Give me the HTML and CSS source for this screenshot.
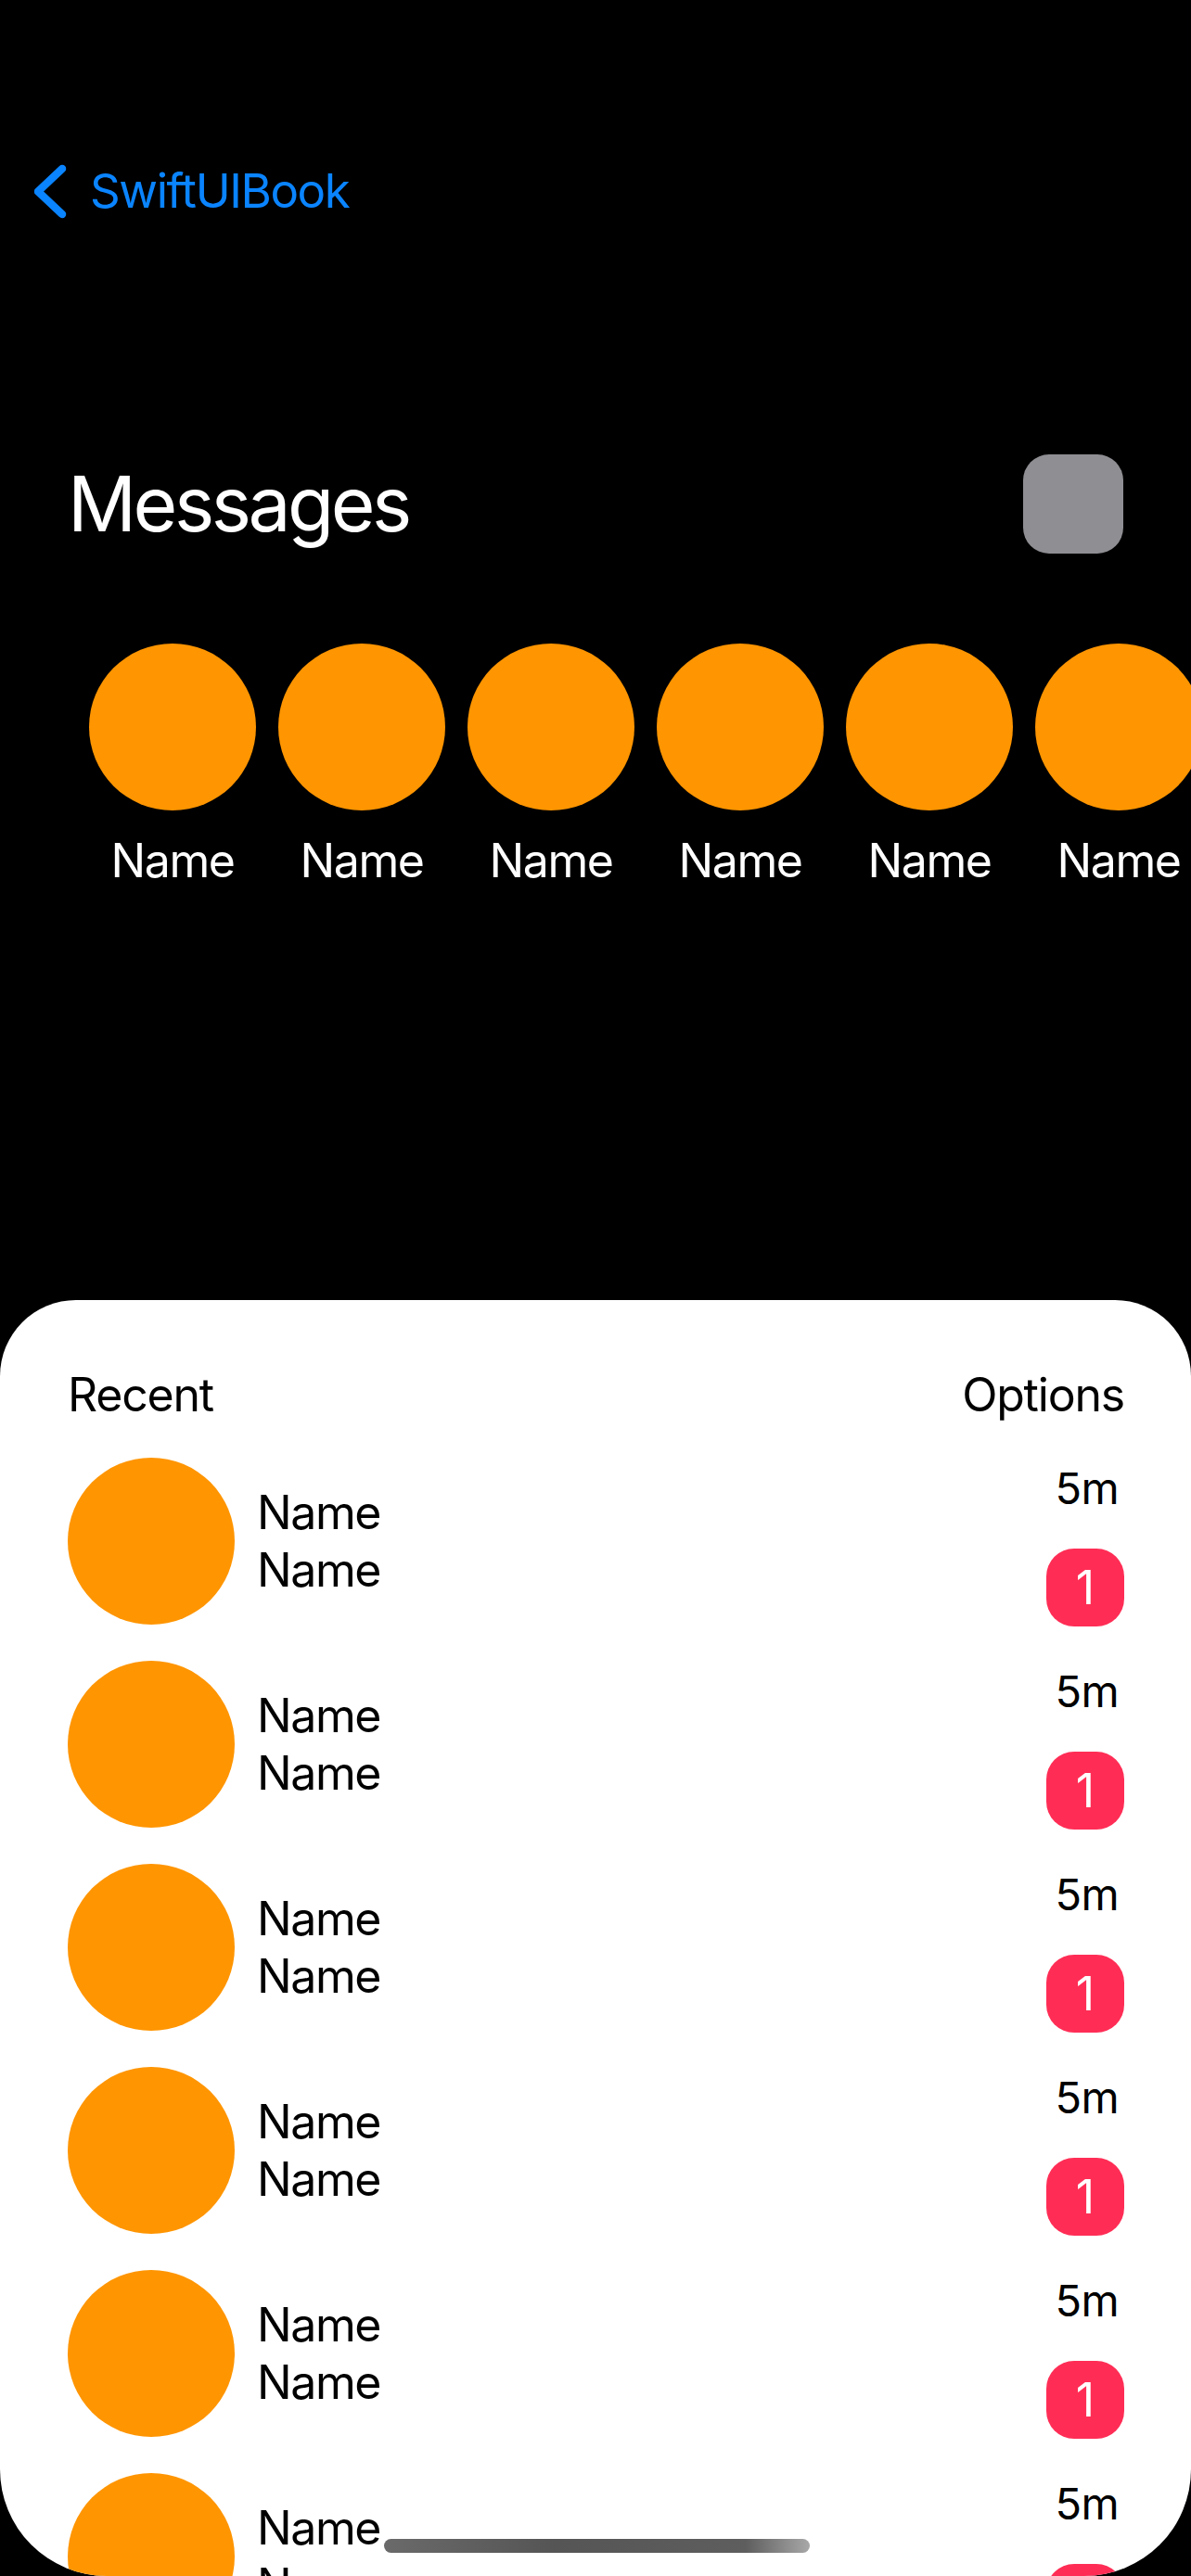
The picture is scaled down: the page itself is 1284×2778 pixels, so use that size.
FILE: index.html
```html
<!DOCTYPE html>
<html>
<head>
<meta charset="utf-8">
<link rel="stylesheet" href="styles.css">
</head>
<body>
<div class="screen">
  <div class="nav">
    <div class="back">
      <svg class="chev" width="36" height="60" viewBox="0 0 36 60"><path d="M30 6 L4 30.5 L30 55" fill="none" stroke="#0a84ff" stroke-width="8.5" stroke-linecap="round" stroke-linejoin="round"/></svg>
      <span class="back-label">SwiftUIBook</span>
    </div>
  </div>
  <div class="title-row">
    <h1 class="title">Messages</h1>
    <div class="square"></div>
  </div>
  <div class="stories">
    <div class="story"><div class="story-avatar"></div><div class="story-name">Name</div></div>
    <div class="story"><div class="story-avatar"></div><div class="story-name">Name</div></div>
    <div class="story"><div class="story-avatar"></div><div class="story-name">Name</div></div>
    <div class="story"><div class="story-avatar"></div><div class="story-name">Name</div></div>
    <div class="story"><div class="story-avatar"></div><div class="story-name">Name</div></div>
    <div class="story"><div class="story-avatar"></div><div class="story-name">Name</div></div>
  </div>
  <div class="sheet">
    <div class="sheet-header">
      <span>Recent</span>
      <span>Options</span>
    </div>
    <div class="list">
      <div class="row"><div class="avatar"></div><div class="names"><div>Name</div><div>Name</div></div><div class="meta"><div class="time">5m</div><div class="badge">1</div></div></div>
      <div class="row"><div class="avatar"></div><div class="names"><div>Name</div><div>Name</div></div><div class="meta"><div class="time">5m</div><div class="badge">1</div></div></div>
      <div class="row"><div class="avatar"></div><div class="names"><div>Name</div><div>Name</div></div><div class="meta"><div class="time">5m</div><div class="badge">1</div></div></div>
      <div class="row"><div class="avatar"></div><div class="names"><div>Name</div><div>Name</div></div><div class="meta"><div class="time">5m</div><div class="badge">1</div></div></div>
      <div class="row"><div class="avatar"></div><div class="names"><div>Name</div><div>Name</div></div><div class="meta"><div class="time">5m</div><div class="badge">1</div></div></div>
      <div class="row"><div class="avatar"></div><div class="names"><div>Name</div><div>Name</div></div><div class="meta"><div class="time">5m</div><div class="badge">1</div></div></div>
    </div>
  </div>
  <div class="home-indicator"></div>
</div>
</body>
</html>
```

FILE: styles.css
```css
* { box-sizing: border-box; }
html, body {
  margin: 0;
  padding: 0;
  background: #000;
}
body {
  width: 1284px;
  height: 2778px;
  overflow: hidden;
  font-family: Inter, "Liberation Sans", sans-serif;
}
.screen {
  position: relative;
  width: 1284px;
  height: 2778px;
  overflow: hidden;
  background: #000;
  border-radius: 0 0 115px 115px;
  display: flex;
  flex-direction: column;
}
.nav {
  margin-top: 176px;
  height: 60px;
  padding-left: 37px;
}
.back {
  display: flex;
  align-items: center;
  height: 60px;
  gap: 24px;
}
.chev { display: block; }
.back-label {
  color: #0a84ff;
  font-size: 51px;
  line-height: 60px;
  letter-spacing: -1.4px;
}
.title-row {
  margin-top: 254px;
  height: 107px;
  padding: 0 73px;
  display: flex;
  align-items: center;
  justify-content: space-between;
}
.title {
  margin: 0;
  color: #fff;
  font-weight: 400;
  font-size: 82px;
  line-height: 100px;
  letter-spacing: -3.5px;
}
.square {
  width: 108px;
  height: 107px;
  border-radius: 28px;
  background: #8e8e93;
}
.stories {
  margin-top: 97px;
  padding-left: 96px;
  display: flex;
  gap: 24px;
  flex-wrap: nowrap;
}
.story {
  flex: 0 0 180px;
  display: flex;
  flex-direction: column;
  align-items: center;
}
.story-avatar {
  width: 180px;
  height: 180px;
  border-radius: 50%;
  background: #ff9500;
}
.story-name {
  margin-top: 24px;
  color: #fff;
  font-size: 50px;
  line-height: 61px;
  letter-spacing: -1.4px;
  white-space: nowrap;
}
.sheet {
  margin-top: 443px;
  flex: 1 0 auto;
  background: #fff;
  border-radius: 82px 82px 0 0;
  padding: 72px 72px 0 73px;
}
.sheet-header {
  display: flex;
  justify-content: space-between;
  color: #000;
  font-size: 50px;
  line-height: 61px;
  letter-spacing: -1.2px;
}
.list {
  margin-top: 37px;
  display: flex;
  flex-direction: column;
  gap: 37px;
}
.row {
  display: flex;
  align-items: flex-start;
  height: 182px;
}
.avatar {
  flex: 0 0 180px;
  width: 180px;
  height: 180px;
  border-radius: 50%;
  background: #ff9500;
}
.names {
  margin-left: 24px;
  margin-top: 28px;
  color: #000;
  font-size: 50px;
  line-height: 62px;
  letter-spacing: -1.4px;
}
.meta {
  margin-left: auto;
  display: flex;
  flex-direction: column;
  align-items: flex-end;
}
.time {
  margin-top: 5px;
  padding-right: 6px;
  color: #000;
  font-size: 47px;
  line-height: 55px;
  letter-spacing: -0.6px;
}
.badge {
  margin-top: 38px;
  width: 84px;
  height: 84px;
  border-radius: 30px;
  background: #ff2d55;
  color: #fff;
  font-size: 50px;
  line-height: 84px;
  text-align: center;
}
.home-indicator {
  position: absolute;
  left: 414px;
  top: 2738px;
  width: 459px;
  height: 15px;
  border-radius: 8px;
  background: linear-gradient(90deg, #6a6a6a 0%, #555 40%, #5e5e5e 85%, #a8a8a8 100%);
}
```
